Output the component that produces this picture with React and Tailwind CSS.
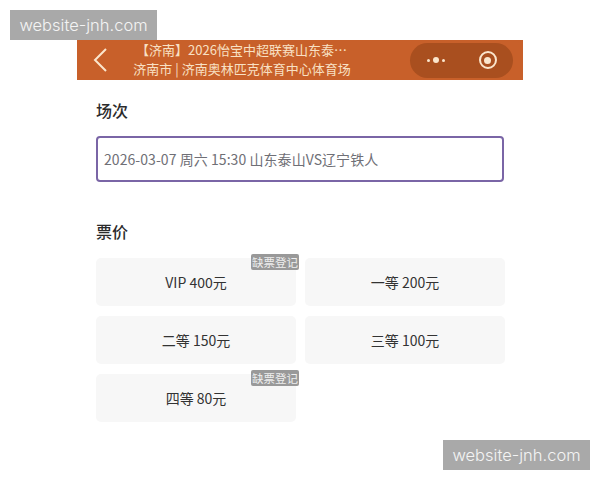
const cjk = 'font-["Noto_Sans_CJK_SC","Noto_Sans",sans-serif]';

function Watermark({ className }) {
  return (
    <div className={`absolute w-[147px] h-[30px] bg-[#a9a9a9] text-[#f4f4f4] text-[16.5px] flex items-center justify-center font-["Inter",sans-serif] font-light ${className}`}>
      website-jnh.com
    </div>
  );
}

function Ticket({ label, badge }) {
  return (
    <div className="relative h-[48px] bg-[#f7f7f7] rounded-[5px] flex items-center justify-center text-[14px] text-[#333333]">
      {label}
      {badge && (
        <div className="absolute right-[-3px] top-[-4px] w-[48px] h-[16px] bg-[#999999] rounded-[2px] text-[#eeeeee] text-[11.5px] leading-[16px] text-center whitespace-nowrap">
          缺票登记
        </div>
      )}
    </div>
  );
}

export default function App() {
  return (
    <div className={`relative w-[600px] h-[480px] bg-white overflow-hidden pt-[40px] flex justify-center ${cjk}`}>
      <Watermark className="left-[10px] top-[10px]" />
      <Watermark className="right-[10px] bottom-[10px]" />
      <div className="w-[446px] flex flex-col">
        <header className="h-[40px] bg-[#c8602a] flex items-center text-[#f8e0c4] pl-[16px] pr-[10px]">
          <svg width="14" height="26" viewBox="0 0 14 26" fill="none" stroke="#fbe6cd" strokeWidth="2" className="shrink-0">
            <path d="M13 2 L2 13 L13 24" />
          </svg>
          <div className="w-[250px] ml-[10px] flex flex-col items-center text-[13px] leading-[19px] whitespace-nowrap">
            <div className="ml-[-1px] mt-[-2px]">【济南】2026怡宝中超联赛山东泰…</div>
            <div>济南市 | 济南奥林匹克体育中心体育场</div>
          </div>
          <div className="ml-auto w-[103px] h-[35px] rounded-full bg-[#a94f1f] flex items-center">
            <div className="flex-1 flex items-center justify-center gap-[3px] pr-[1px]">
              <span className="w-[3px] h-[3px] rounded-full bg-[#fbe6cd]" />
              <span className="w-[6px] h-[6px] rounded-full bg-[#fbe6cd]" />
              <span className="w-[3px] h-[3px] rounded-full bg-[#fbe6cd]" />
            </div>
            <div className="flex-1 flex items-center justify-center">
              <div className="w-[18px] h-[18px] rounded-full border-[2.5px] border-[#fbe6cd] flex items-center justify-center">
                <span className="w-[7px] h-[7px] rounded-full bg-[#fbe6cd]" />
              </div>
            </div>
          </div>
        </header>

        <main className="pl-[19px] pr-[19px]">
          <h2 className="mt-[20px] text-[16px] leading-[20px] font-medium text-[#2b2b2b]">场次</h2>
          <div className="mt-[16px] h-[46px] rounded-[4px] border-2 border-[#7a65a6] flex items-center pl-[6px] text-[14px] tracking-[0.06px] text-[#6f6f76] whitespace-nowrap">
            2026-03-07 周六 15:30 山东泰山VS辽宁铁人
          </div>
          <h2 className="mt-[39px] text-[16px] leading-[20px] font-medium text-[#2b2b2b]">票价</h2>
          <div className="mt-[17px] grid grid-cols-[200px_200px] gap-x-[9px] gap-y-[10px]">
            <Ticket label="VIP 400元" badge />
            <Ticket label="一等 200元" />
            <Ticket label="二等 150元" />
            <Ticket label="三等 100元" />
            <Ticket label="四等 80元" badge />
          </div>
        </main>
      </div>
    </div>
  );
}
